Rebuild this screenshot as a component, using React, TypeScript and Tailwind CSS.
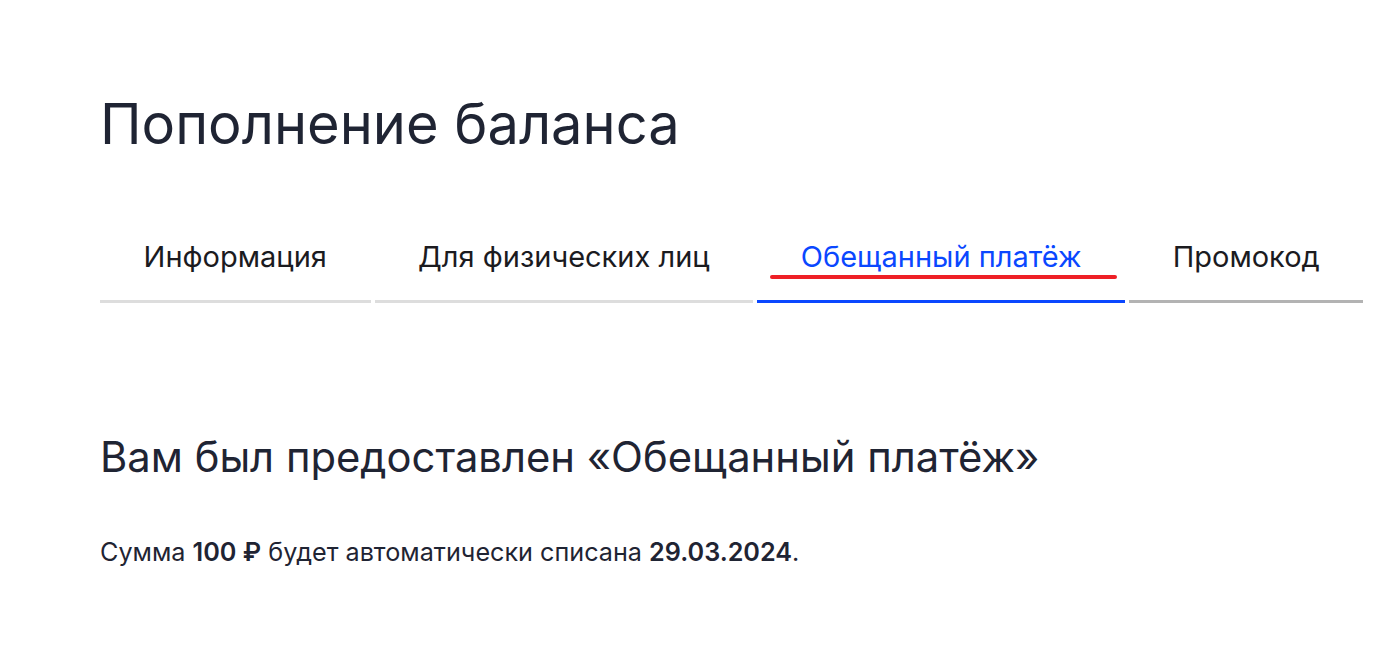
import React from "react";

const tabs = [
  { label: "Информация", state: "light" },
  { label: "Для физических лиц", state: "light" },
  { label: "Обещанный платёж", state: "active" },
  { label: "Промокод", state: "dark" },
];

export default function App() {
  return (
    <div
      className="min-h-[649px] bg-white pl-[100px] pt-[84px] text-[#1f2433]"
      style={{ fontFamily: "Inter, 'Noto Sans', sans-serif" }}
    >
      <h1 className="text-[56px] leading-[80px] font-normal">
        Пополнение баланса
      </h1>
      <div className="mt-[62px] flex gap-[4px]">
        {tabs.map((t) => (
          <div key={t.label} className="flex flex-col items-stretch">
            <div
              className={
                "px-[43.6px] pt-[14px] text-[29px] leading-[34px] whitespace-nowrap " +
                (t.state === "active" ? "text-[#0a47ff]" : "text-[#1b1b1f]")
              }
            >
              {t.label}
            </div>
            <div className="h-[26px] flex items-start">
              {t.state === "active" ? (
                <div className="ml-[13px] mr-[8px] mt-[1px] h-[4px] flex-1 rounded-full bg-[#ee1f26]" />
              ) : null}
            </div>
            <div
              className={
                "h-[3px] " +
                (t.state === "active"
                  ? "bg-[#0a47ff]"
                  : t.state === "dark"
                  ? "bg-[#b3b3b3]"
                  : "bg-[#dddddd]")
              }
            />
          </div>
        ))}
      </div>
      <h2 className="mt-[130px] text-[41.75px] leading-[48px] font-normal">
        Вам был предоставлен «Обещанный платёж»
      </h2>
      <p className="mt-[56px] text-[25.2px] leading-[30px]">
        Сумма <b className="font-semibold">100 ₽</b> будет автоматически списана{" "}
        <b className="font-semibold">29.03.2024</b>.
      </p>
    </div>
  );
}
